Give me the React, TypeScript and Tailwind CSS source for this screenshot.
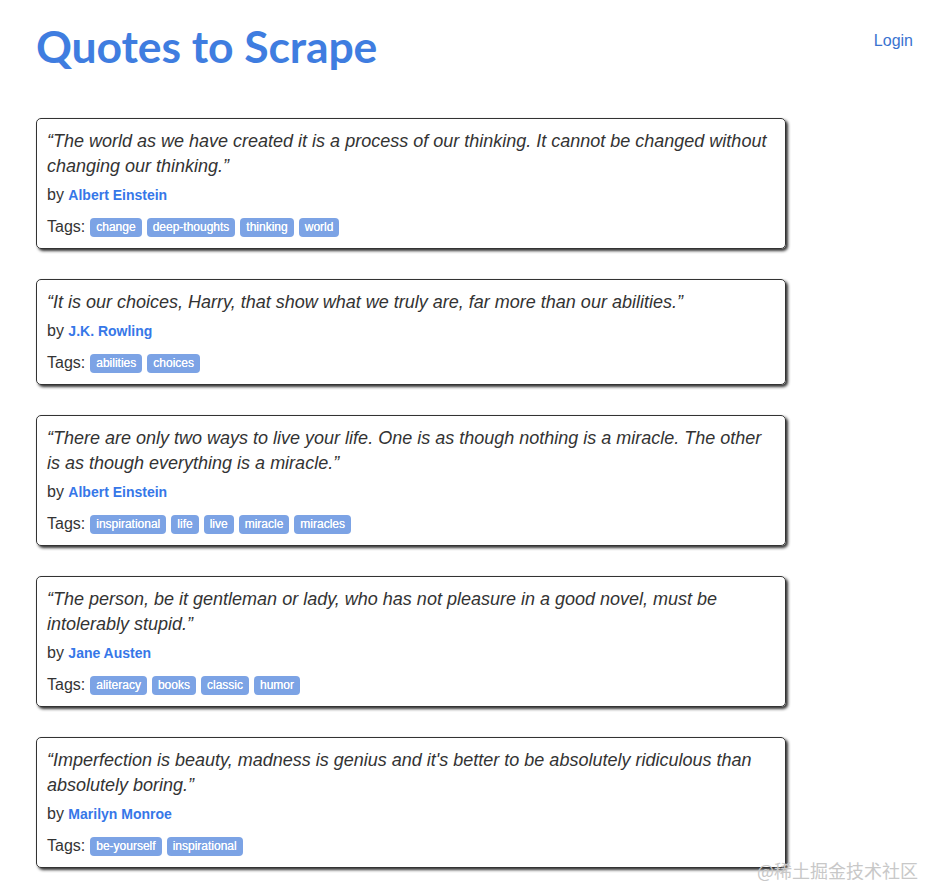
const quotes = [
  {
    text: "“The world as we have created it is a process of our thinking. It cannot be changed without changing our thinking.”",
    author: "Albert Einstein",
    tags: ["change", "deep-thoughts", "thinking", "world"],
  },
  {
    text: "“It is our choices, Harry, that show what we truly are, far more than our abilities.”",
    author: "J.K. Rowling",
    tags: ["abilities", "choices"],
  },
  {
    text: "“There are only two ways to live your life. One is as though nothing is a miracle. The other is as though everything is a miracle.”",
    author: "Albert Einstein",
    tags: ["inspirational", "life", "live", "miracle", "miracles"],
  },
  {
    text: "“The person, be it gentleman or lady, who has not pleasure in a good novel, must be intolerably stupid.”",
    author: "Jane Austen",
    tags: ["aliteracy", "books", "classic", "humor"],
  },
  {
    text: "“Imperfection is beauty, madness is genius and it's better to be absolutely ridiculous than absolutely boring.”",
    author: "Marilyn Monroe",
    tags: ["be-yourself", "inspirational"],
  },
];

export default function App() {
  return (
    <div className="relative min-h-[885px] bg-white font-['Liberation_Sans',Arial,sans-serif] text-[#333]">
      {/* Header */}
      <header className="flex items-start justify-between pl-[36px] pr-[13px] pt-[22px]">
        <h1 className="font-['Lato',sans-serif] text-[44.5px] font-bold leading-[48px] tracking-[-0.1px] text-[#3f7de0]">
          Quotes to Scrape
        </h1>
        <a href="#" className="mt-[9px] text-[16px] leading-[20px] text-[#3a73d0]">
          Login
        </a>
      </header>

      {/* Quotes */}
      <main className="ml-[36px] mt-[48px] flex w-[750px] flex-col gap-[30px]">
        {quotes.map((q) => (
          <div
            key={q.text}
            className="rounded-[5px] border border-[#333] px-[10px] pb-[10px] pt-[10px] shadow-[2px_2px_3px_#333]"
          >
            <span className="mb-[5px] block text-[18px] italic leading-[25px]">{q.text}</span>
            <div className="text-[16px] leading-[22px]">
              by <span className="text-[14px] font-bold text-[#3677e8]">{q.author}</span>
            </div>
            <div className="mt-[10px] flex items-center gap-[5px] text-[16px] leading-[22px]">
              <span>Tags:</span>
              {q.tags.map((t) => (
                <a
                  key={t}
                  href="#"
                  className="rounded-[4px] bg-[#7ca3e5] px-[6px] pb-[3px] pt-[2px] text-[12px] leading-[14px] text-white [text-shadow:0_0_0.4px_#fff]"
                >
                  {t}
                </a>
              ))}
            </div>
          </div>
        ))}
      </main>

      {/* Watermark */}
      <div className="pointer-events-none absolute bottom-[4px] right-[8px] font-['Noto_Sans_CJK_SC',sans-serif] text-[18px] leading-[22px] text-[#c8c8c8]">
        @稀土掘金技术社区
      </div>
    </div>
  );
}
